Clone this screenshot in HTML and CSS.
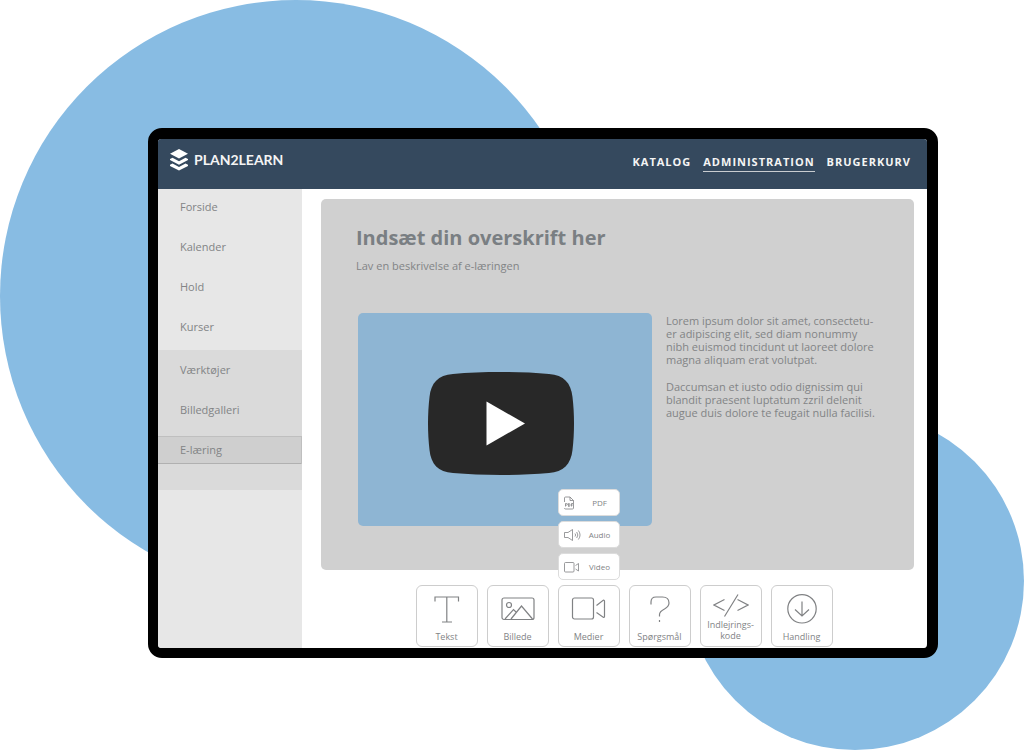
FILE: index.html
```html
<!DOCTYPE html>
<html lang="da">
<head>
<meta charset="utf-8">
<meta name="viewport" content="width=device-width, initial-scale=1">
<title>Plan2Learn</title>
<link rel="stylesheet" href="styles.css">
</head>
<body>
<div class="stage">
  <div class="disc disc-large"></div>
  <div class="disc disc-small"></div>
  <div class="device">
    <header class="topbar">
      <a class="brand" href="#">
        <svg class="brand-mark" viewBox="0 0 18 22" aria-hidden="true">
          <path d="M9 0 18 4.800 9 9.600 0 4.800z"/>
          <path d="M0 9.900 2.500 8.700 9 12.200 15.500 8.700 18 9.900v1.200L9 15.700 0 11.100z"/>
          <path d="M0 15.700 2.500 14.500 9 18 15.500 14.500 18 15.700v1.200L9 21.500 0 16.900z"/>
        </svg>
        <span>PLAN2LEARN</span>
      </a>
      <nav class="topnav">
        <a href="#">KATALOG</a>
        <a class="current" href="#">ADMINISTRATION</a>
        <a href="#">BRUGERKURV</a>
      </nav>
    </header>
    <div class="workspace">
      <nav class="sidebar">
        <div class="group">
          <a href="#">Forside</a>
          <a href="#">Kalender</a>
          <a href="#">Hold</a>
          <a href="#">Kurser</a>
        </div>
        <div class="group group-tools">
          <a href="#">Værktøjer</a>
          <a href="#">Billedgalleri</a>
          <a class="active" href="#">E-læring</a>
        </div>
      </nav>
      <main class="editor">
        <section class="lesson">
          <h1>Indsæt din overskrift her</h1>
          <p class="intro">Lav en beskrivelse af e-læringen</p>
          <div class="lesson-body">
            <button class="video" type="button" aria-label="Afspil video">
              <svg class="play" viewBox="0 0 146 103" aria-hidden="true">
                <path fill="#282828" d="M25 2C54-.6 92-.6 121 2c15 1 22 9 23.500 23 2 17 2 36 0 53-1.500 14-9 22-23.500 23-29 2.600-67 2.600-96 0C10 100 3 92 1.500 78c-2-17-2-36 0-53C3 11 10 3 25 2z"/>
                <path fill="#fff" d="M58.500 29.500v44L97 51.500z"/>
              </svg>
            </button>
            <div class="copy">
              <p>Lorem ipsum dolor sit amet, consectetu-<br>er adipiscing elit, sed diam nonummy<br>nibh euismod tincidunt ut laoreet dolore<br>magna aliquam erat volutpat.</p>
              <p>Daccumsan et iusto odio dignissim qui<br>blandit praesent luptatum zzril delenit<br>augue duis dolore te feugait nulla facilisi.</p>
            </div>
          </div>
        </section>
        <div class="toolbar">
          <button class="tool" type="button">
            <svg viewBox="0 0 36 30" aria-hidden="true"><path d="M6 7.500V3h23.500v4.500M17.800 3v25M13 28h10"/></svg>
            <span>Tekst</span>
          </button>
          <button class="tool" type="button">
            <svg viewBox="0 0 36 30" aria-hidden="true"><rect x="2" y="4" width="32" height="21.500" rx="2"/><circle cx="9" cy="11" r="2.500"/><path d="M5 25l8.500-9.500 3 3M11 25l10.500-13L32.500 25"/></svg>
            <span>Billede</span>
          </button>
          <div class="tool-wrap">
            <div class="submenu">
              <button class="option" type="button">
                <svg viewBox="0 0 18 16" aria-hidden="true"><path d="M1.500 7V3q0-1 1-1H7l3.500 3.500V13q0 1-1 1h-7q-1 0-1-1M7 2v3.500h3.500M2.500 11.500v-3h1q1 0 1 .8t-1 .8h-1M5.500 8.500v3h.5q1 0 1-1.500t-1-1.500zM8.500 11.500v-3H10M8.500 10h1.300"/></svg>
                <span>PDF</span>
              </button>
              <button class="option" type="button">
                <svg viewBox="0 0 18 16" aria-hidden="true"><path d="M5 5.500H1.500v5H5l4.500 3V2.500L5 5.500M12 6.500q1.300 1.500 0 3M13.700 5q2.300 3 0 6M15.400 3.500q3.300 4.500 0 9"/></svg>
                <span>Audio</span>
              </button>
              <button class="option" type="button">
                <svg viewBox="0 0 18 16" aria-hidden="true"><rect x="1.500" y="3.500" width="9.500" height="9.500" rx="1"/><path d="M12.500 6.500 15.500 4.500v7.500L12.500 10"/></svg>
                <span>Video</span>
              </button>
            </div>
            <button class="tool" type="button">
              <svg viewBox="0 0 36 30" aria-hidden="true"><rect x="1.500" y="4" width="21" height="21" rx="2"/><path d="M25.500 11.500 32.500 6q1 0 1 1v15.500q0 1-1 1L25.500 18.500"/></svg>
              <span>Medier</span>
            </button>
          </div>
          <button class="tool" type="button">
            <svg viewBox="0 0 36 30" aria-hidden="true"><path d="M9 10.500V8Q9 3 14 3h6.500q6.500 0 6.500 6 0 3.500-4.500 6-5 2.500-5 5.500v2M17.500 26v2"/></svg>
            <span>Spørgsmål</span>
          </button>
          <button class="tool tool-tall" type="button">
            <svg viewBox="0 0 36 24" aria-hidden="true"><path d="M11.500 5.500 1 11l10.500 5.500M24.500 5.500 35 11l-10.500 5.500M25 .5 11.500 22.500"/></svg>
            <span>Indlejrings-<br>kode</span>
          </button>
          <button class="tool" type="button">
            <svg viewBox="0 0 36 30" aria-hidden="true"><circle cx="18" cy="14.800" r="14.200"/><path d="M18 7.500V22M11 15.500l7 6.500 7-6.500"/></svg>
            <span>Handling</span>
          </button>
        </div>
      </main>
    </div>
  </div>
</div>
</body>
</html>
```
FILE: styles.css
```css
* { box-sizing: border-box; }

body {
  margin: 0;
  background: #fff;
  font-family: "Open Sans", "Noto Sans", sans-serif;
  font-size: 11px;
  color: #828486;
}

h1, p { margin: 0; font-size: inherit; }
a { color: inherit; text-decoration: none; }

button {
  font: inherit;
  color: inherit;
  border: 0;
  padding: 0;
  cursor: pointer;
}

.stage {
  position: relative;
  min-height: 100vh;
  padding: 128px 86px 92px 148px;
  overflow: hidden;
}

.disc { position: absolute; border-radius: 50%; background: #88bce3; }
.disc-large { left: 0; top: 0; width: 592px; height: 592px; }
.disc-small { right: 0; bottom: 0; width: 338px; height: 338px; }

.device {
  position: relative;
  border: solid #000;
  border-width: 11px 11px 10px 10px;
  border-radius: 14px;
  background: #fff;
}

.topbar {
  display: flex;
  align-items: center;
  justify-content: space-between;
  height: 50px;
  padding: 0 16px 8px 12px;
  border-radius: 3px 3px 0 0;
  background: #35495e;
  color: #f4f4f4;
}

.brand {
  display: flex;
  align-items: center;
  gap: 6px;
  font: 700 14px/20px Lato, sans-serif;
}
.brand-mark { width: 18px; height: 22px; fill: #fff; }

.topnav {
  display: flex;
  gap: 12px;
  padding-top: 5px;
  font-weight: 700;
  line-height: 16px;
  letter-spacing: 1px;
}
.topnav a { border-bottom: 1px solid transparent; padding-bottom: 1px; }
.topnav .current { border-color: #c8ccd0; }

.workspace { display: flex; }

.sidebar {
  flex: 0 0 144px;
  padding-top: 4px;
  background: #e7e7e7;
  border-bottom-left-radius: 3px;
}
.group { display: flex; flex-direction: column; gap: 12px; }
.group a { padding: 0 22px; line-height: 28px; }
.group-tools {
  margin-top: 9px;
  padding: 6px 0 26px;
  background: #dadada;
}
.group .active {
  background: #cfcfcf;
  box-shadow: inset 0 1px #bfbfbf, inset -1px 0 #bfbfbf, inset 0 -1px #b0b0b0;
}

.editor { flex: 1; padding: 10px 13px 1px 19px; }

.lesson {
  padding: 25px 36px 44px 35px;
  border-radius: 5px;
  background: #d0d0d0;
}
.lesson h1 {
  font-size: 20px;
  line-height: 28px;
  color: #7a7f83;
}
.intro { margin-top: 6px; line-height: 16px; }

.lesson-body { display: flex; gap: 14px; margin-top: 39px; }

.video {
  display: flex;
  flex: 1;
  align-items: center;
  justify-content: center;
  height: 213px;
  margin-left: 2px;
  padding: 8px 8px 0 0;
  border-radius: 5px;
  background: #8eb5d3;
}
.play { width: 146px; height: 103px; }

.copy {
  display: flex;
  flex: 0 0 212px;
  flex-direction: column;
  gap: 14px;
  padding-top: 1px;
  line-height: 13px;
  white-space: nowrap;
}

.toolbar {
  display: flex;
  justify-content: center;
  gap: 9px;
  margin-top: 15px;
  padding-left: 13px;
}
.tool-wrap { position: relative; }

.tool {
  display: flex;
  flex-direction: column;
  align-items: center;
  gap: 7px;
  width: 62px;
  height: 62px;
  padding-top: 8px;
  border: 1px solid #cdcdcd;
  border-radius: 6px;
  background: #fff;
  font-size: 9px;
  line-height: 12px;
}
.tool svg { width: 36px; height: 30px; }
.tool-tall { gap: 1px; line-height: 11px; }
.tool-tall svg { height: 24px; }

.tool svg, .option svg { fill: none; stroke: #808284; stroke-width: 1.2; }
.option svg { flex: none; width: 18px; height: 16px; stroke-width: 0.8; }

.submenu {
  position: absolute;
  bottom: 67px;
  left: 0;
  display: flex;
  flex-direction: column;
  gap: 5px;
  width: 100%;
}
.option {
  display: flex;
  align-items: center;
  height: 27px;
  padding: 0 3px 0 4px;
  border: 1px solid #dcdcdc;
  border-radius: 5px;
  background: #fff;
  font-size: 8px;
}
.option span { flex: 1; padding-left: 3px; text-align: center; }
```
